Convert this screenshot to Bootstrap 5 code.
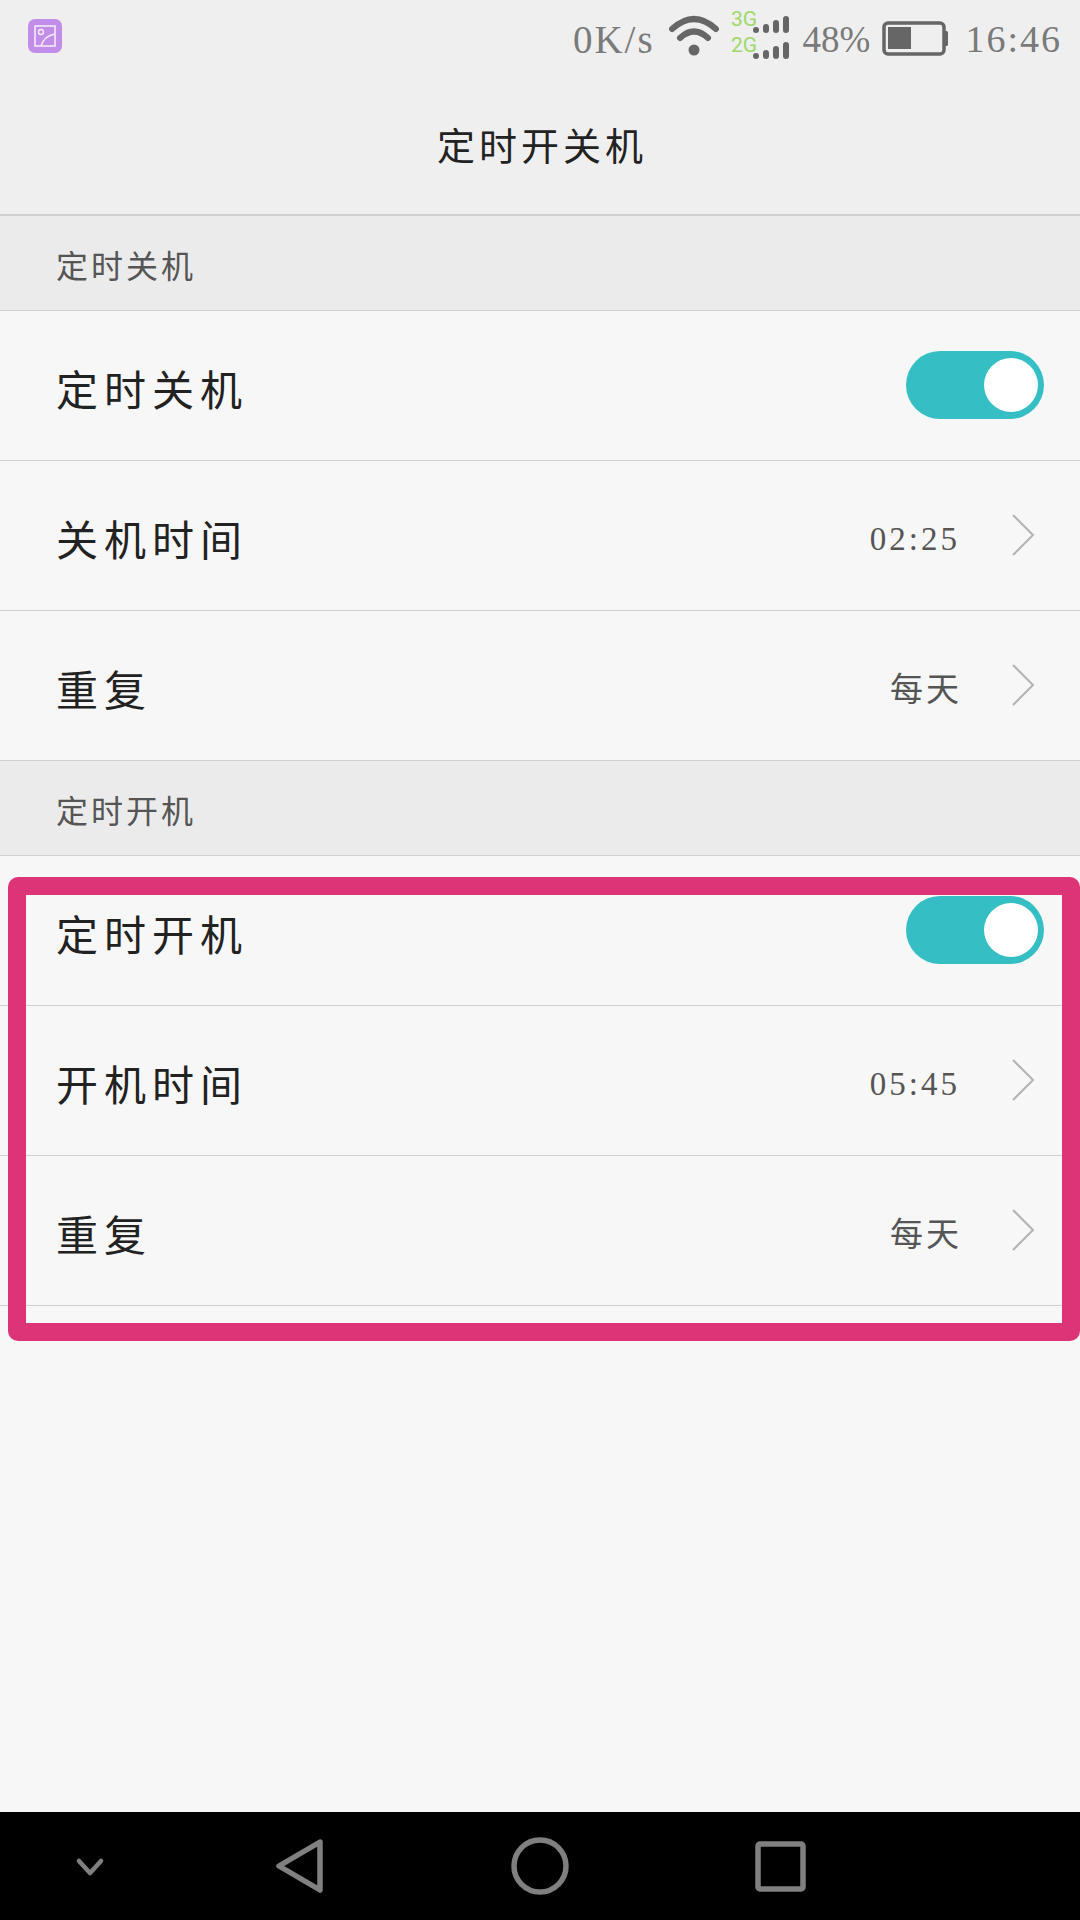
<!DOCTYPE html>
<html lang="zh">
<head>
<meta charset="utf-8">
<title>定时开关机</title>
<link href="https://cdn.jsdelivr.net/npm/bootstrap@5.3.0/dist/css/bootstrap.min.css" rel="stylesheet">
<style>
html,body{margin:0;background:#f7f7f7}
.phone{width:1080px;height:1920px;position:relative;overflow:hidden;background:#f7f7f7;font-family:"Noto Sans CJK SC","Liberation Serif",sans-serif;color:#222}
.top-area{height:216px;background:#efefef;border-bottom:2px solid #cfcfcf}
.stat-bar{height:72px;padding:0 18px 0 28px}
.stat-text{font-family:"Liberation Serif",serif;font-size:38px;color:#7a7a7a;line-height:1;letter-spacing:2px;padding-top:20px}
.speed-text{font-size:39px;margin-right:14px}
.pct-text{font-size:37px;letter-spacing:0;margin-right:12px;padding-top:21px}
.wifi-ico{margin-right:12px}
.sig-ico{margin-right:12px}
.batt-ico{margin-right:16px}
.app-pic{width:34px;height:34px;margin-top:19px;display:block}
.page-title{font-size:38px;letter-spacing:4px;line-height:1;text-align:center;margin-top:53px;color:#222;padding-left:4px}
.sect{height:95px;background:#ebebeb;border-bottom:1px solid #d2d2d2;padding:24px 0 0 56px;font-size:32px;letter-spacing:3px;color:#555}
.item{height:150px;background:#f7f7f7;border-bottom:1px solid #cfcfcf;padding:0 36px 0 56px}
.item-name{font-size:42px;letter-spacing:6px;line-height:1;padding-top:5px;color:#222}
.item-val{font-size:33px;letter-spacing:3px;color:#555;line-height:1;padding-top:4px;margin-right:82px}
.item-time{font-family:"Liberation Serif",serif;font-size:33px;letter-spacing:3px;padding-top:7px;margin-right:84px}
.arrow{width:24px;height:44px;display:block}
.item-rel{position:relative}
.arrow-slot{position:absolute;right:45px;top:52px}
.swtch{width:138px;height:68px;border-radius:34px;background:#35bfc4;position:relative;margin-top:-1px}
.swtch-dot{position:absolute;width:54px;height:54px;border-radius:50%;background:#fff;right:6px;top:7px}
.spacer{flex:1}
.navbar-bottom{height:108px;background:#000;position:relative}
.nav-draw{position:absolute;left:0;top:0}
.mark-box{position:absolute;left:8px;top:877px;width:1072px;height:464px;border:18px solid #dd3377;border-radius:10px;pointer-events:none}
</style>
</head>
<body>
<div class="phone d-flex flex-column">
  <div class="top-area">
    <div class="stat-bar d-flex justify-content-between align-items-start">
      <svg class="app-pic" viewBox="0 0 34 34">
        <rect width="34" height="34" rx="7" fill="#c08ee8"/>
        <rect x="7" y="7" width="20" height="20" fill="none" stroke="#f4eafc" stroke-width="1.6"/>
        <circle cx="13" cy="13" r="2.5" fill="none" stroke="#f4eafc" stroke-width="1.4"/>
        <path d="M13 27 Q16 17 27 15" fill="none" stroke="#f4eafc" stroke-width="1.6"/>
      </svg>
      <div class="d-flex align-items-start">
        <span class="stat-text speed-text">0K/s</span>
        <svg width="50" height="72" viewBox="0 0 50 72" class="d-block wifi-ico">
          <g fill="none" stroke="#666" stroke-linecap="round">
            <path d="M3 29 Q25 9 47 29" stroke-width="6"/>
            <path d="M11 38 Q25 25 39 38" stroke-width="6"/>
          </g>
          <circle cx="25" cy="50" r="5.5" fill="#666"/>
        </svg>
        <svg width="60" height="72" viewBox="0 0 60 72" class="d-block sig-ico">
          <text x="0" y="26" font-family="Roboto, sans-serif" font-size="21" fill="#9ed86a">3G</text>
          <text x="0" y="52" font-family="Roboto, sans-serif" font-size="21" fill="#9ed86a">2G</text>
          <g fill="#666">
            <circle cx="25" cy="30" r="3"/><rect x="32" y="24" width="6" height="9" rx="3"/><rect x="42" y="20" width="6" height="13" rx="3"/><rect x="52" y="16" width="6" height="17" rx="3"/>
            <circle cx="25" cy="56" r="3"/><rect x="32" y="50" width="6" height="9" rx="3"/><rect x="42" y="46" width="6" height="13" rx="3"/><rect x="52" y="42" width="6" height="17" rx="3"/>
          </g>
        </svg>
        <span class="stat-text pct-text">48%</span>
        <svg width="67" height="72" viewBox="0 0 67 72" class="d-block batt-ico">
          <rect x="2" y="23" width="60" height="31" rx="4" fill="none" stroke="#666" stroke-width="3.5"/>
          <rect x="6" y="27" width="23" height="22" fill="#666"/>
          <rect x="62" y="31" width="4" height="15" rx="1.5" fill="#666"/>
        </svg>
        <span class="stat-text">16:46</span>
      </div>
    </div>
    <div class="page-title">定时开关机</div>
  </div>

  <div class="sect">定时关机</div>
  <div class="item item-rel d-flex justify-content-between align-items-center">
    <span class="item-name">定时关机</span>
    <div class="swtch"><div class="swtch-dot"></div></div>
  </div>
  <div class="item item-rel d-flex justify-content-between align-items-center">
    <span class="item-name">关机时间</span>
    <span class="item-val item-time">02:25</span>
    <svg class="arrow arrow-slot" viewBox="0 0 24 44"><path d="M2 2 L22 22 L2 42" fill="none" stroke="#b3b3b3" stroke-width="2"/></svg>
  </div>
  <div class="item item-rel d-flex justify-content-between align-items-center">
    <span class="item-name">重复</span>
    <span class="item-val">每天</span>
    <svg class="arrow arrow-slot" viewBox="0 0 24 44"><path d="M2 2 L22 22 L2 42" fill="none" stroke="#b3b3b3" stroke-width="2"/></svg>
  </div>

  <div class="sect">定时开机</div>
  <div class="item item-rel d-flex justify-content-between align-items-center">
    <span class="item-name">定时开机</span>
    <div class="swtch"><div class="swtch-dot"></div></div>
  </div>
  <div class="item item-rel d-flex justify-content-between align-items-center">
    <span class="item-name">开机时间</span>
    <span class="item-val item-time">05:45</span>
    <svg class="arrow arrow-slot" viewBox="0 0 24 44"><path d="M2 2 L22 22 L2 42" fill="none" stroke="#b3b3b3" stroke-width="2"/></svg>
  </div>
  <div class="item item-rel d-flex justify-content-between align-items-center">
    <span class="item-name">重复</span>
    <span class="item-val">每天</span>
    <svg class="arrow arrow-slot" viewBox="0 0 24 44"><path d="M2 2 L22 22 L2 42" fill="none" stroke="#b3b3b3" stroke-width="2"/></svg>
  </div>

  <div class="spacer"></div>
  <div class="navbar-bottom">
    <svg class="nav-draw" width="1080" height="108" viewBox="0 0 1080 108">
      <g fill="none" stroke="#808080" stroke-linejoin="round" stroke-linecap="round">
        <path d="M79 49 L90 61 L101 49" stroke-width="4.5"/>
        <path d="M320 30 L279 54 L320 78 Z" stroke-width="5.5"/>
        <circle cx="540" cy="54" r="26" stroke-width="5.5"/>
        <rect x="758" y="32" width="45" height="45" rx="2" stroke-width="5.5"/>
      </g>
    </svg>
  </div>

  <div class="mark-box"></div>
</div>
<script src="https://cdn.jsdelivr.net/npm/bootstrap@5.3.0/dist/js/bootstrap.bundle.min.js"></script>
</body>
</html>
